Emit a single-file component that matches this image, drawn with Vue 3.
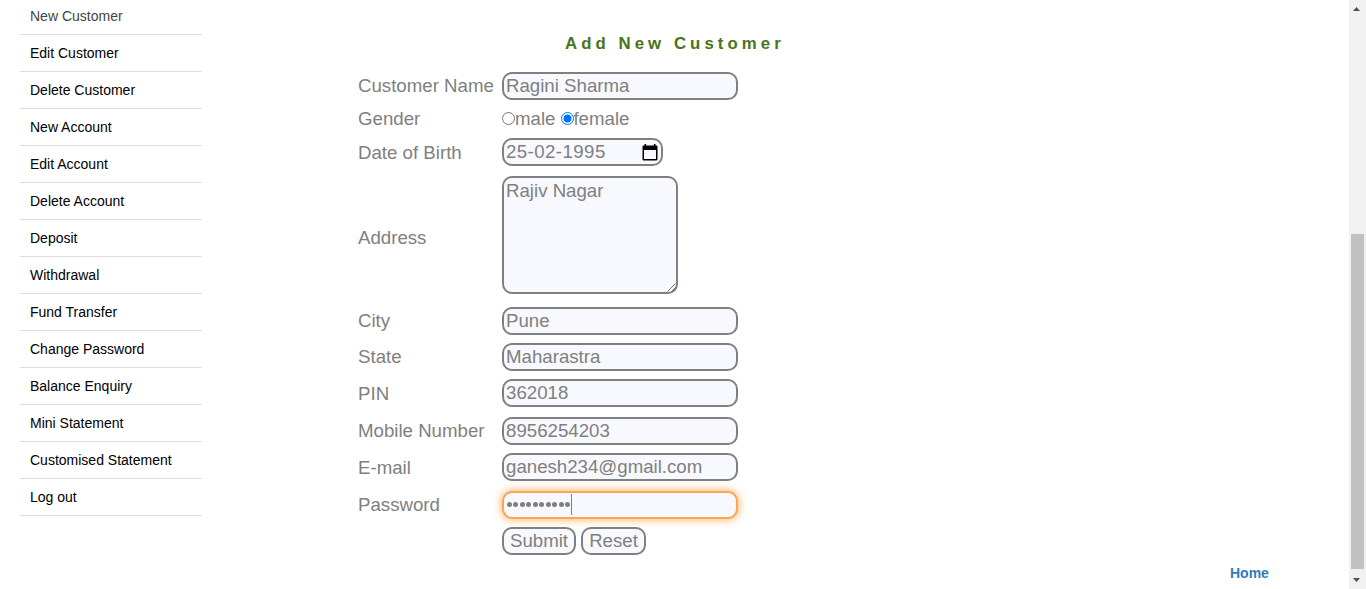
<script setup>
const menu = [
  'New Customer', 'Edit Customer', 'Delete Customer', 'New Account', 'Edit Account',
  'Delete Account', 'Deposit', 'Withdrawal', 'Fund Transfer', 'Change Password',
  'Balance Enquiry', 'Mini Statement', 'Customised Statement', 'Log out'
]
const rows = [
  { label: 'Customer Name', type: 'text', value: 'Ragini Sharma' },
  { label: 'Gender', type: 'radio' },
  { label: 'Date of Birth', type: 'date', value: '25-02-1995', low: true },
  { label: 'Address', type: 'area', value: 'Rajiv Nagar' },
  { label: 'City', type: 'text', value: 'Pune' },
  { label: 'State', type: 'text', value: 'Maharastra' },
  { label: 'PIN', type: 'text', value: '362018', low: true },
  { label: 'Mobile Number', type: 'text', value: '8956254203', gap: true },
  { label: 'E-mail', type: 'text', value: 'ganesh234@gmail.com', low: true },
  { label: 'Password', type: 'password', gap: true },
  { label: '', type: 'buttons' }
]
</script>

<template>
  <div class="page">
    <nav class="side">
      <a v-for="(m, i) in menu" :key="m" :class="{ active: i === 0 }">{{ m }}</a>
    </nav>
    <main class="main">
      <h1>Add New Customer</h1>
      <div v-for="r in rows" :key="r.label" class="row" :class="[r.type, { low: r.low, gap: r.gap }]">
        <label>{{ r.label }}</label>
        <div v-if="r.type === 'text'" class="field">{{ r.value }}</div>
        <div v-else-if="r.type === 'radio'" class="radios">
          <i class="dot"></i><span>male</span><i class="dot on"></i><span>female</span>
        </div>
        <div v-else-if="r.type === 'date'" class="field datefield">
          <span>{{ r.value }}</span>
          <svg width="16" height="17" viewBox="0 0 16 17"><path fill="#000" fill-rule="evenodd" d="M2.5 0h1.6v1.5h7.8V0h1.6v1.5h.7q1.3 0 1.3 1.3v12.4q0 1.3-1.3 1.3H1.8q-1.3 0-1.3-1.3V2.8q0-1.3 1.3-1.3h.7zM2 6v9h12V6z" /></svg>
        </div>
        <div v-else-if="r.type === 'area'" class="field areafield">
          {{ r.value }}
          <svg class="grip" width="9" height="9" viewBox="0 0 9 9"><path d="M.5 8.5l8-8M4.5 8.5l4-4" stroke="#555" stroke-width=".8" /></svg>
        </div>
        <div v-else-if="r.type === 'password'" class="field focused">
          <i v-for="n in 10" :key="n" class="bullet"></i><i class="caret"></i>
        </div>
        <div v-else class="btns"><button class="submit">Submit</button><button class="reset">Reset</button></div>
      </div>
    </main>
    <footer><a>Home</a></footer>
    <div class="scroll">
      <svg width="7" height="4" viewBox="0 0 7 4"><path d="M0 4L3.5 0L7 4z" fill="#505050" /></svg>
      <div class="thumb"></div>
      <svg width="7" height="4" viewBox="0 0 7 4"><path d="M0 0L3.5 4L7 0z" fill="#505050" /></svg>
    </div>
  </div>
</template>

<style>
body { background: #fff; overflow: hidden; }
</style>

<style scoped>
* { box-sizing: border-box; }
.page {
  width: 1366px; height: 589px; overflow: hidden;
  display: grid; grid-template-columns: 202px 1028px 119px 17px;
  font-family: "Liberation Sans", Arial, sans-serif; background: #fff;
}
.side { padding-left: 20px; margin-top: -2px; }
.side a {
  display: block; height: 37px; padding-left: 10px; line-height: 36px;
  font-size: 14px; color: #000; border-bottom: 1px solid #ddd;
}
.side a.active { color: #444; }
.main { padding: 34px 0 0 156px; }
h1 {
  margin: 0 0 14px 207px; height: 20px; line-height: 20px;
  font-size: 16.8px; font-weight: bold; letter-spacing: 4.06px; color: #487518; white-space: nowrap;
}
.row { display: flex; align-items: center; height: 36px; font-size: 18.67px; color: gray; }
.row label { width: 144px; line-height: 22px; margin-top: -1px; white-space: nowrap; }
.row.low label { margin-top: 1px; }
.row.gap { margin-top: 2px; }
.row.radio { height: 30px; }
.row.area { height: 130px; margin-bottom: 3px; }
.row.area label { margin-top: 6px; }
.field {
  width: 236px; height: 28px; border: 2px solid gray; border-radius: 10px;
  background: #f8f8ff; padding: 0 2px; line-height: 23px; white-space: nowrap;
}
.datefield { width: 161px; display: flex; justify-content: space-between; padding-right: 3px; }
.datefield span { letter-spacing: .43px; }
.datefield svg { margin: 4px 0 0 0; }
.areafield { width: 176px; height: 118px; padding-top: 1px; position: relative; }
.grip { position: absolute; right: 0; bottom: 0; }
.focused { display: flex; align-items: center; padding-bottom: 2px; border-color: #ffa54f; box-shadow: 0 0 10px #ffa54f; }
.bullet { width: 5px; height: 5px; margin: 0 .75px; border-radius: 50%; background: gray; }
.caret { width: 1px; height: 21px; background: #808080; }
.radios { display: flex; align-items: center; line-height: 22px; }
.radios span { margin-right: 5.5px; margin-top: -1px; }
.radios .on + span { margin-left: -.5px; }
.dot { width: 13px; height: 13px; margin-top: -2px; border-radius: 50%; border: 1px solid #767676; background: #fff; }
.dot.on { border-color: #0075ff; background: radial-gradient(circle, #0075ff 3.7px, #fff 4.3px); }
.btns { display: flex; gap: 5px; }
button {
  height: 28px; padding: 0; border: 2px solid gray; border-radius: 10px; background: #f8f8ff;
  font: 18.67px/22px "Liberation Sans", Arial, sans-serif; color: gray;
}
.submit { width: 74px; }
.reset { width: 65px; }
footer { align-self: end; padding-bottom: 6px; font-size: 14px; line-height: 20px; font-weight: bold; color: #337ab7; }
.scroll {
  background: #f1f1f1; display: flex; flex-direction: column; align-items: center;
  padding: 7px 2px 7px 0;
}
.thumb { width: 13px; height: 335px; margin: 223px -2px 9px 0; background: #c1c1c1; }
</style>
